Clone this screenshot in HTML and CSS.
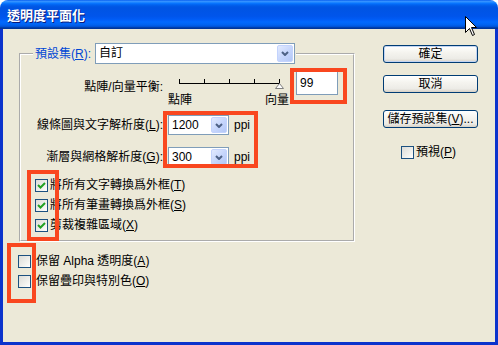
FILE: index.html
```html
<!DOCTYPE html>
<html>
<head>
<meta charset="utf-8">
<link rel="stylesheet" href="styles.css">
</head>
<body>
<div class="window">
  <div class="titlebar"><span class="title">透明度平面化</span></div>
  <div class="client">
    <div class="main">
      <fieldset class="group">
        <legend class="legend">
          <span class="legend-label">預設集(<u>R</u>):</span>
          <div class="combo combo-wide">
            <span class="combo-text">自訂</span>
            <span class="combo-btn"><svg width="8" height="5" viewBox="0 0 8 5"><path d="M1 1 L4 4 L7 1" fill="none" stroke="#4D6185" stroke-width="2"/></svg></span>
          </div>
        </legend>
        <div class="row row-slider">
          <span class="field-label slider-label">點陣/向量平衡:</span>
          <div class="slider">
            <svg width="126" height="18" viewBox="0 0 126 18">
              <g stroke="#000" shape-rendering="crispEdges">
                <line x1="11" y1="12.5" x2="112" y2="12.5"/>
                <line x1="11.5" y1="8" x2="11.5" y2="12"/>
                <line x1="36.5" y1="8" x2="36.5" y2="12"/>
                <line x1="61.5" y1="8" x2="61.5" y2="12"/>
                <line x1="86.5" y1="8" x2="86.5" y2="12"/>
                <line x1="111.5" y1="8" x2="111.5" y2="12"/>
              </g>
              <path d="M111.5 12.5 L115.5 17.5 L107.5 17.5 Z" fill="#fff" stroke="#808080"/>
            </svg>
            <div class="slider-ends"><span>點陣</span><span>向量</span></div>
          </div>
          <div class="textbox">99</div>
        </div>
        <div class="row row-res">
          <span class="field-label">線條圖與文字解析度(<u>L</u>):</span>
          <div class="combo combo-small">
            <span class="combo-text">1200</span>
            <span class="combo-btn"><svg width="8" height="5" viewBox="0 0 8 5"><path d="M1 1 L4 4 L7 1" fill="none" stroke="#4D6185" stroke-width="2"/></svg></span>
          </div>
          <span class="unit">ppi</span>
        </div>
        <div class="row row-res row-res2">
          <span class="field-label">漸層與網格解析度(<u>G</u>):</span>
          <div class="combo combo-small">
            <span class="combo-text">300</span>
            <span class="combo-btn"><svg width="8" height="5" viewBox="0 0 8 5"><path d="M1 1 L4 4 L7 1" fill="none" stroke="#4D6185" stroke-width="2"/></svg></span>
          </div>
          <span class="unit">ppi</span>
        </div>
        <div class="checks">
          <label class="check"><span class="box"><svg width="9" height="9" viewBox="0 0 9 9"><path d="M1 4 L3.5 6.5 L8 2" fill="none" stroke="#21A121" stroke-width="2"/></svg></span><span>將所有文字轉換爲外框(<u>T</u>)</span></label>
          <label class="check"><span class="box"><svg width="9" height="9" viewBox="0 0 9 9"><path d="M1 4 L3.5 6.5 L8 2" fill="none" stroke="#21A121" stroke-width="2"/></svg></span><span>將所有筆畫轉換爲外框(<u>S</u>)</span></label>
          <label class="check"><span class="box"><svg width="9" height="9" viewBox="0 0 9 9"><path d="M1 4 L3.5 6.5 L8 2" fill="none" stroke="#21A121" stroke-width="2"/></svg></span><span>剪裁複雜區域(<u>X</u>)</span></label>
        </div>
      </fieldset>
      <div class="checks checks-outer">
        <label class="check"><span class="box"></span><span>保留 Alpha 透明度(<u>A</u>)</span></label>
        <label class="check"><span class="box"></span><span>保留疊印與特別色(<u>O</u>)</span></label>
      </div>
    </div>
    <div class="side">
      <button class="btn btn-default">確定</button>
      <button class="btn">取消</button>
      <button class="btn btn-save">儲存預設集(<u>V</u>)...</button>
      <label class="check check-preview"><span class="box"></span><span>預視(<u>P</u>)</span></label>
    </div>
  </div>
  <div class="mark mark-value"></div>
  <div class="mark mark-res"></div>
  <div class="mark mark-checks"></div>
  <div class="mark mark-outer"></div>
  <svg class="cursor" width="13" height="21" viewBox="0 0 13 21"><path d="M0.5 0.5 V16.5 L4.5 12.5 L7.5 19.5 L9.5 18.5 L6.5 11.5 H11.5 Z" fill="#fff" stroke="#000"/></svg>
</div>
</body>
</html>
```

FILE: styles.css
```css
html, body {
  margin: 0;
  padding: 0;
  background: #fff;
}
body {
  font-family: "Liberation Sans", "Noto Sans CJK TC", sans-serif;
  font-size: 12px;
  color: #000;
}
.window {
  position: relative;
  width: 498px;
  height: 345px;
  display: flex;
  flex-direction: column;
}
.titlebar {
  flex: none;
  height: 29px;
  box-sizing: border-box;
  border-radius: 8px 8px 0 0;
  background: linear-gradient(to bottom, #0058EE 0%, #3A93FF 4%, #288EFF 7%, #127DFF 10%, #036FFC 13%, #0262EE 17%, #0057E5 23%, #0054E3 28%, #0055EB 56%, #005BF5 66%, #026AFE 76%, #0062EF 86%, #0052D6 92%, #0040AB 95%, #003092 100%);
  display: flex;
  align-items: center;
  padding-left: 7px;
}
.title {
  color: #fff;
  font-family: "Noto Sans CJK TC", sans-serif;
  font-weight: bold;
  font-size: 13px;
  line-height: 16px;
  text-shadow: 1px 1px 0 #0A1A7A;
}
.client {
  flex: 1;
  display: flex;
  background: #ECE9D8;
  border: 3px solid #0B33CC;
  border-top: 0;
}
.main {
  flex: none;
  width: 352px;
  padding-top: 14px;
}
.group {
  margin: 0 0 0 16px;
  padding: 0 0 5px 0;
  width: 336px;
  min-width: 0;
  box-sizing: border-box;
  border: 2px groove #fff;
}
.legend {
  margin-left: 12px;
  padding: 0 1px 0 2px;
  height: 21px;
  display: flex;
  align-items: center;
}
.legend-label {
  width: 60px;
  color: #0046D5;
  line-height: 14px;
}
.combo {
  display: flex;
  box-sizing: border-box;
  background: #fff;
  border: 1px solid #7F9DB9;
  padding: 1px;
  flex: none;
}
.combo-wide {
  width: 200px;
  height: 21px;
}
.combo-small {
  width: 61px;
  height: 20px;
}
.combo-text {
  flex: 1;
  padding-left: 2px;
  line-height: 16px;
}
.combo-wide .combo-text {
  padding-left: 2px;
  line-height: 17px;
}
.combo-btn {
  width: 16px;
  box-sizing: border-box;
  border: 1px solid #C3D3FD;
  border-radius: 2px;
  background: linear-gradient(135deg, #E2EAFE 0%, #C5D5FC 55%, #B3C7F6 100%);
  display: flex;
  align-items: center;
  justify-content: center;
}
.combo-btn svg {
  display: block;
}
.row {
  display: flex;
}
.field-label {
  flex: none;
  width: 142px;
  margin-right: 5px;
  text-align: right;
  line-height: 14px;
}
.row-slider {
  margin-top: 7px;
  align-items: flex-start;
}
.slider-label {
  padding-top: 9px;
}
.slider {
  flex: none;
  width: 126px;
}
.slider svg {
  display: block;
}
.slider-ends {
  display: flex;
  justify-content: space-between;
  margin-top: 4px;
  padding-right: 5px;
  line-height: 14px;
}
.textbox {
  flex: none;
  margin-left: 2px;
  width: 42px;
  height: 24px;
  box-sizing: border-box;
  border: 1px solid #7F9DB9;
  background: #fff;
  padding-left: 3px;
  line-height: 22px;
}
.row-res {
  align-items: center;
  height: 20px;
  margin-top: 8px;
}
.row-res2 {
  margin-top: 12px;
}
.unit {
  margin-left: 5px;
}
.checks {
  display: flex;
  flex-direction: column;
  padding-left: 14px;
  margin-top: 8px;
}
.check {
  display: flex;
  align-items: center;
  height: 20px;
  line-height: 14px;
}
.box {
  flex: none;
  width: 13px;
  height: 13px;
  box-sizing: border-box;
  border: 1px solid #1C5180;
  background: linear-gradient(135deg, #DCDCD7 0%, #F4F4F0 70%, #FFFFFF 100%);
  margin-right: 2px;
  display: flex;
  align-items: center;
  justify-content: center;
}
.box svg {
  display: block;
}
.checks-outer {
  padding-left: 15px;
  margin-top: 9px;
}
.checks-outer .box {
  margin-right: 5px;
}
.side {
  flex: none;
  margin-left: 28px;
  padding-top: 16px;
  width: 95px;
  display: flex;
  flex-direction: column;
}
.btn {
  width: 95px;
  height: 18px;
  padding: 0;
  margin: 0;
  box-sizing: border-box;
  border: 1px solid #003C74;
  border-radius: 3px;
  background: linear-gradient(to bottom, #FFFFFF 0%, #F5F4EF 40%, #ECEBE6 80%, #D6D0C5 100%);
  font: inherit;
  color: #000;
  line-height: 16px;
  white-space: nowrap;
}
.btn-default {
  box-shadow: inset 0 0 0 1px #C2D4F2;
}
.btn + .btn {
  margin-top: 12px;
}
.btn.btn-save {
  margin-top: 17px;
}
.check-preview {
  margin-top: 14px;
  padding-left: 18px;
}
.mark {
  position: absolute;
  box-sizing: border-box;
  border: 4px solid #F9471F;
}
.mark-value {
  left: 290px;
  top: 68px;
  width: 57px;
  height: 36px;
}
.mark-res {
  left: 163px;
  top: 111px;
  width: 95px;
  height: 57px;
}
.mark-checks {
  left: 27px;
  top: 170px;
  width: 32px;
  height: 71px;
}
.mark-outer {
  left: 7px;
  top: 243px;
  width: 29px;
  height: 60px;
}
.cursor {
  position: absolute;
  left: 465px;
  top: 16px;
}
```
